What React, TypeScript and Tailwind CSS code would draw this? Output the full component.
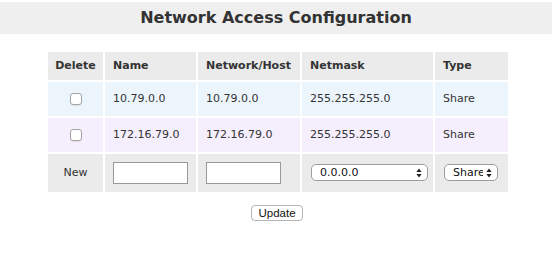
import { useState } from "react";

//
// [SECTION] Content
//

const rows: RowData[] = [
  { name: "10.79.0.0", network: "10.79.0.0", netmask: "255.255.255.0", type: "Share", bg: "bg-[#edf5fc]" },
  { name: "172.16.79.0", network: "172.16.79.0", netmask: "255.255.255.0", type: "Share", bg: "bg-[#f5eefc]" },
];

function UpDownArrows() {
  return (
    <svg width="6" height="10" viewBox="0 0 6 10" className="pointer-events-none absolute right-[6px] top-1/2 -translate-y-1/2">
      <path d="M3 0.5 L5.6 4 H0.4 Z" fill="#222" />
      <path d="M3 9.5 L5.6 6 H0.4 Z" fill="#222" />
    </svg>
  );
}

function Select({ value, options, className }: SelectProps) {
  const [current, setCurrent] = useState(value);

  return (
    <div className={`relative inline-block ${className ?? ""}`}>
      <select
        value={current}
        onChange={(e) => setCurrent(e.target.value)}
        className="h-[17px] w-full appearance-none rounded-[5px] border border-[#9d9d9d] bg-white pl-[8px] pr-[14px] text-[11px] leading-[15px] text-[#111] outline-none"
      >
        {options.map((o) => (
          <option key={o} value={o}>
            {o}
          </option>
        ))}
      </select>
      <UpDownArrows />
    </div>
  );
}

export default function App() {
  return (
    <div className="min-h-[254px] bg-white pt-[2px] font-['DejaVu_Sans',Verdana,sans-serif] text-[11px] text-[#333]">
      <div className="flex h-[32px] items-center justify-center bg-[#efefef]">
        <h1 className="text-[16px] font-bold text-[#333]">Network Access Configuration</h1>
      </div>

      <table className="ml-[46px] mt-[16px] border-separate border-spacing-[2px] text-left">
        <thead>
          <tr className="h-[28px] bg-[#ebebeb] font-bold">
            <th className="w-[55px] p-0 text-center">Delete</th>
            <th className="w-[91px] p-0 pl-[8px]">Name</th>
            <th className="w-[102px] p-0 pl-[8px]">Network/Host</th>
            <th className="w-[131px] p-0 pl-[8px]">Netmask</th>
            <th className="w-[73px] p-0 pl-[8px]">Type</th>
          </tr>
        </thead>
        <tbody>
          {rows.map((row) => (
            <tr key={row.name} className={`h-[34px] ${row.bg}`}>
              <td className="p-0 text-center">
                <input
                  type="checkbox"
                  className="m-0 inline-block h-[12px] w-[12px] appearance-none rounded-[3px] border border-[#a3a3a3] bg-white align-middle shadow-[0_1px_1px_rgba(0,0,0,0.08)] checked:bg-[#3b82f6]"
                />
              </td>
              <td className="p-0 pl-[8px]">{row.name}</td>
              <td className="p-0 pl-[8px]">{row.network}</td>
              <td className="p-0 pl-[8px]">{row.netmask}</td>
              <td className="p-0 pl-[8px]">{row.type}</td>
            </tr>
          ))}
          <tr className="h-[38px] bg-[#ebebeb]">
            <td className="p-0 text-center">New</td>
            <td className="p-0 pl-[8px]">
              <input type="text" className="block h-[22px] w-[75px] border border-[#999] bg-white outline-none" />
            </td>
            <td className="p-0 pl-[8px]">
              <input type="text" className="block h-[22px] w-[75px] border border-[#999] bg-white outline-none" />
            </td>
            <td className="p-0 pl-[9px]">
              <Select value="0.0.0.0" options={["0.0.0.0", "255.0.0.0", "255.255.0.0", "255.255.255.0"]} className="w-[117px] align-middle" />
            </td>
            <td className="p-0 pl-[9px]">
              <Select value="Share" options={["Share", "Deny"]} className="w-[54px] align-middle" />
            </td>
          </tr>
        </tbody>
      </table>

      <div className="mt-[11px] flex justify-center pl-[2px]">
        <button
          type="button"
          className="h-[16px] w-[52px] rounded-[4px] border border-[#b5b5b5] bg-white font-['Liberation_Sans',Arial,sans-serif] text-[11.5px] leading-[14px] text-[#111]"
        >
          Update
        </button>
      </div>
    </div>
  );
}

//
// [SECTION] Types
//

interface RowData {
  name: string;
  network: string;
  netmask: string;
  type: string;
  bg: string;
}

interface SelectProps {
  value: string;
  options: string[];
  className?: string;
}
